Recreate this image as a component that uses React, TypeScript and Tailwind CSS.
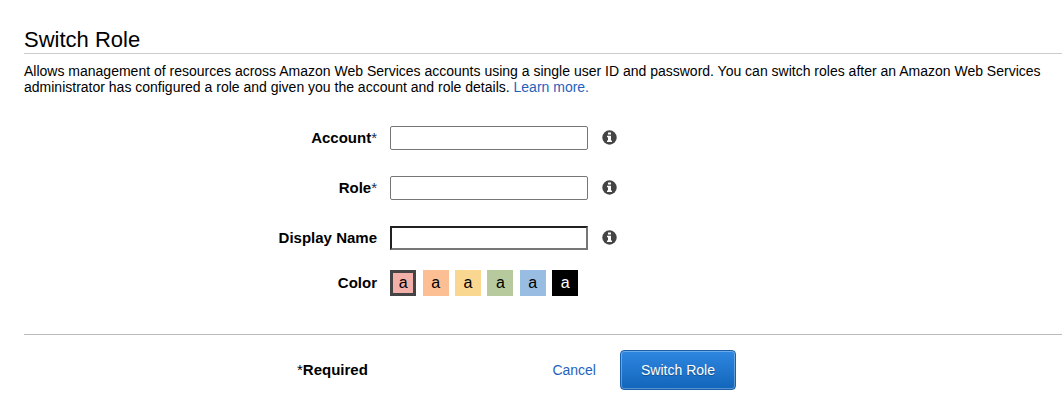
import React from "react";

const swatches = [
  "bg-[#f2b0a9] border-[3px] border-[#444444] text-black",
  "bg-[#fbbf93] text-black",
  "bg-[#fad791] text-black",
  "bg-[#b7ca9d] text-black",
  "bg-[#99bce3] text-black",
  "bg-black text-white",
];

function InfoIcon() {
  return (
    <svg className="mb-[2px] ml-[14px] h-[15px] w-[15px] shrink-0" viewBox="0 0 15 15">
      <circle cx="7.5" cy="7.5" r="7.2" fill="#444444" />
      <path fill="#fff" d="M6 2.4h3v2.2H6zM5 5.7h4v4.8h1V12H5v-1.5h1V7.2H5z" />
    </svg>
  );
}

function Field({ label, required, inset }: { label: string; required?: boolean; inset?: boolean }) {
  return (
    <div className="flex h-6 items-center">
      <label className="w-[377px] text-right text-[15px] font-bold leading-6">
        {label}
        {required && <span className="font-normal text-[#16325c]">*</span>}
      </label>
      <input
        aria-label={label}
        className={
          inset
            ? "ml-[13px] h-6 w-[198px] border-2 border-t-[#212121] border-r-[#767676] border-b-[#767676] border-l-[#212121] bg-white px-1 outline-none"
            : "ml-[13px] h-6 w-[198px] rounded-[2px] border border-[#767676] bg-white px-1 outline-none"
        }
      />
      <InfoIcon />
    </div>
  );
}

export default function App() {
  return (
    <main className="h-[420px] w-[1062px] overflow-hidden bg-white font-['Liberation_Sans',Arial,sans-serif] text-black">
      <header className="ml-6 h-[54px] border-b border-[#cccccc] pt-[27px]">
        <h1 className="text-[22px] leading-[26px]">Switch Role</h1>
      </header>
      <p className="ml-6 mt-[9px] whitespace-nowrap text-[14px] leading-4">
        Allows management of resources across Amazon Web Services accounts using a single user ID and password. You can switch roles after an Amazon Web Services
        <br />
        administrator has configured a role and given you the account and role details. <a href="#" className="text-[#1f62bb]">Learn more.</a>
      </p>
      <div className="mt-[31px] flex flex-col gap-[26px]">
        <Field label="Account" required />
        <Field label="Role" required />
        <Field label="Display Name" inset />
      </div>
      <div className="mt-5 flex h-[26px] items-center">
        <span className="w-[377px] text-right text-[15px] font-bold">Color</span>
        <div className="ml-[13.2px] flex gap-[6.4px]">
          {swatches.map((s) => (
            <button key={s} className={`flex h-[26px] w-[26px] items-center justify-center text-[16px] leading-none ${s}`}>a</button>
          ))}
        </div>
      </div>
      <footer className="ml-6 mt-[38px] flex h-[56px] items-center border-t border-[#bbbbbb] pt-[15px]">
        <span className="ml-[273px] w-[255px] text-[15px] font-bold"><span className="font-normal">*</span>Required</span>
        <a href="#" className="w-[68px] pl-[0.4px] text-[14px] text-[#1f62bb]">Cancel</a>
        <button className="h-10 w-[116px] rounded border border-[#1a5fac] bg-linear-to-b from-[#2f87e0] to-[#1166bb] text-[14px] text-white shadow-[inset_0_0_0_1px_rgba(255,255,255,0.3)] [text-shadow:0_1px_1px_rgba(0,0,0,0.35)]">Switch Role</button>
      </footer>
    </main>
  );
}
